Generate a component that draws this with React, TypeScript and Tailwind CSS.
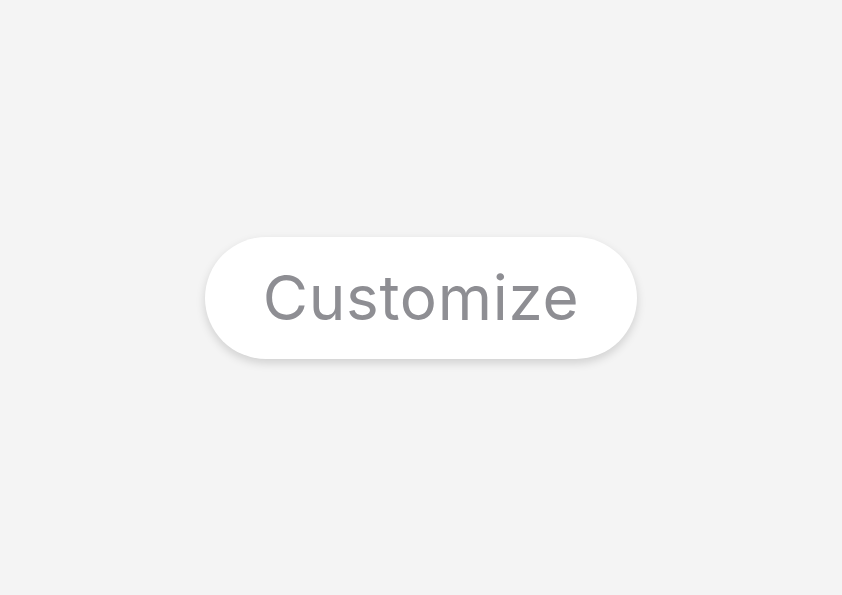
export default function App() {
  return (
    <div className="flex h-[595px] w-[842px] items-center justify-center bg-[#f4f4f4]">
      <button
        className="flex h-[122px] w-[432px] items-center justify-center rounded-full bg-white text-[62px] leading-none tracking-[0.7px] text-[#8e8e93] shadow-[0_4px_10px_rgba(0,0,0,0.15)]"
        style={{ fontFamily: 'Inter, "Liberation Sans", sans-serif' }}
      >
        Customize
      </button>
    </div>
  );
}
